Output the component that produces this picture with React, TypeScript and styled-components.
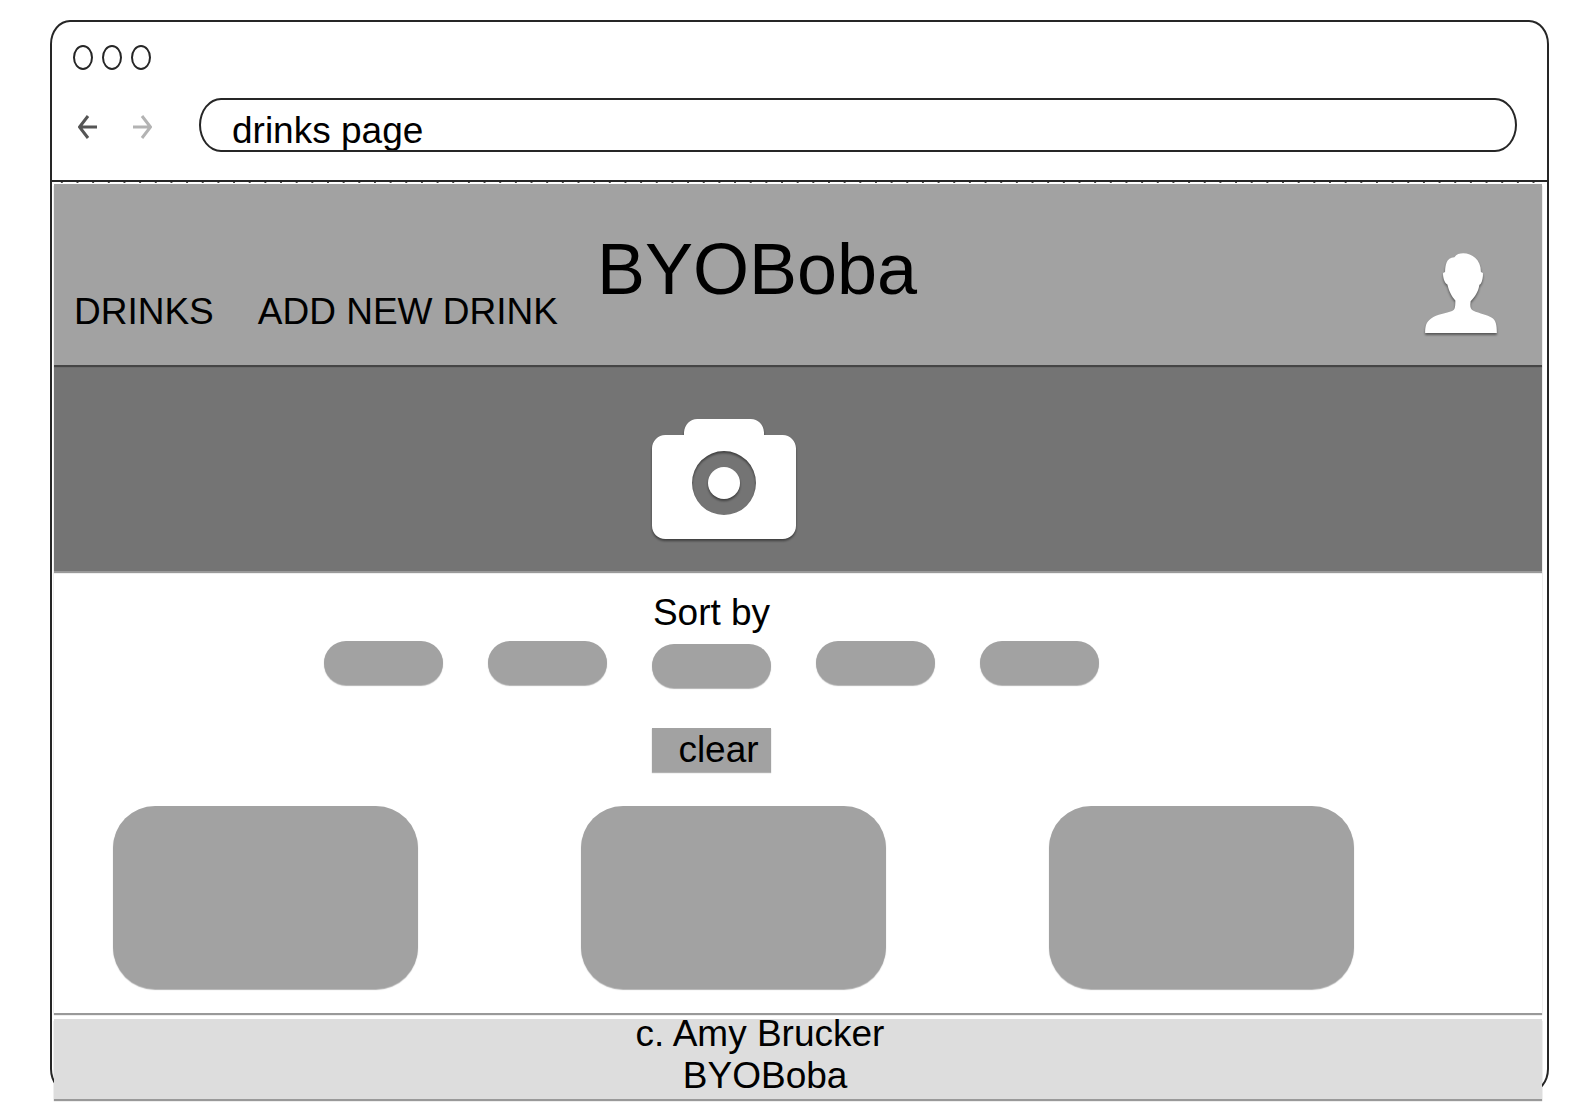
import React from "react";
import styled, { createGlobalStyle } from "styled-components";

const fontStack = `"Liberation Sans", Arial, Helvetica, sans-serif`;
const ink = "#262626";
const grey = "#a2a2a2";
const darkGrey = "#747474";
const panelShadow = "0 2px 1px rgba(0, 0, 0, 0.4)";
const softShadow = "0 1px 1px rgba(0, 0, 0, 0.3)";

const GlobalStyle = createGlobalStyle`
  *, *::before, *::after { box-sizing: border-box; }
  body {
    margin: 0;
    background: #fff;
    color: #000;
    font-family: ${fontStack};
    font-size: 37px;
    line-height: 42px;
  }
  button, input { font: inherit; color: inherit; }
  button { border: 0; padding: 0; background: none; cursor: pointer; }
  h1, h2, p, ul { margin: 0; padding: 0; font-weight: 400; }
  svg { display: block; }
`;

const Page = styled.div`
  display: flow-root;
  padding-bottom: 20px;
`;

const BrowserFrame = styled.div`
  margin: 20px 41px 0 50px;
  border: 2px solid ${ink};
  border-radius: 20px / 24px;
`;

const Chrome = styled.div`
  display: flex;
  flex-direction: column;
  gap: 28px;
  padding: 23px 30px 28px 21px;
  border-bottom: 2px solid ${ink};
`;

const WindowDots = styled.div`
  display: flex;
  gap: 9px;
`;

const Dot = styled.span`
  width: 20px;
  height: 25px;
  border: 2px solid ${ink};
  border-radius: 50%;
`;

const Toolbar = styled.div`
  display: flex;
  align-items: center;
  padding-left: 5px;
`;

const HistoryButtons = styled.div`
  display: flex;
  gap: 36px;
  margin-right: 47px;
  padding-top: 4px;
`;

const HistoryButton = styled.button<{ $muted?: boolean }>`
  color: ${(p) => (p.$muted ? "#b3b3b3" : "#555")};
`;

const AddressBar = styled.input`
  flex: 1;
  min-width: 0;
  height: 54px;
  padding: 11px 31px 0;
  border: 2px solid ${ink};
  border-radius: 22px / 27px;
  background: transparent;
  outline: 0;
`;

const Viewport = styled.div`
  display: flex;
  flex-direction: column;
  margin: 0 5px 0 2px;
`;

const Ruler = styled.div`
  height: 2px;
  background: linear-gradient(
      90deg,
      transparent calc(50% - 1px),
      #444 calc(50% - 1px),
      #444 calc(50% + 1px),
      transparent calc(50% + 1px)
    )
    0 0 / calc(100% / 95) 1px repeat-x;
`;

const Header = styled.header`
  position: relative;
  z-index: 3;
  display: flex;
  align-items: flex-start;
  height: 181px;
  padding: 43px 45px 0 20px;
  background: ${grey};
  box-shadow: ${panelShadow};
`;

const Nav = styled.nav`
  display: flex;
  gap: 44px;
  margin: 64px 39px 0 0;
  white-space: nowrap;
`;

const NavLink = styled.a`
  color: inherit;
  text-decoration: none;
`;

const Title = styled.h1`
  font-size: 72px;
  line-height: 84px;
`;

const ProfileButton = styled.button`
  margin: 26px 0 0 auto;
  filter: drop-shadow(0 2px 1px rgba(0, 0, 0, 0.45));
`;

const Hero = styled.section`
  position: relative;
  z-index: 2;
  display: flex;
  justify-content: center;
  height: 206px;
  padding: 54px 148px 0 0;
  background: ${darkGrey};
  box-shadow: ${panelShadow};

  svg {
    filter: drop-shadow(0 2px 1px rgba(0, 0, 0, 0.45));
  }
`;

const Content = styled.main`
  position: relative;
  z-index: 1;
  padding: 21px 0 24px;
  background: #fff;
  box-shadow: ${panelShadow};
`;

const SortArea = styled.section`
  display: flex;
  flex-direction: column;
  align-items: center;
  padding-right: 173px;
`;

const SortLabel = styled.h2`
  font-size: 37px;
`;

const Pills = styled.div`
  display: flex;
  align-items: flex-start;
  gap: 45px;
  margin: 7px 0 40px;
`;

const Pill = styled.button<{ $lowered?: boolean }>`
  width: 119px;
  height: 44px;
  margin-top: ${(p) => (p.$lowered ? "3px" : "0")};
  border-radius: 22px;
  background: ${grey};
  box-shadow: ${softShadow};
`;

const ClearButton = styled.button`
  width: 119px;
  height: 44px;
  padding-left: 14px;
  background: ${grey};
  box-shadow: ${softShadow};
`;

const DrinkList = styled.ul`
  display: flex;
  justify-content: space-between;
  margin-top: 34px;
  padding: 0 188px 0 59px;
  list-style: none;
`;

const DrinkCard = styled.li`
  width: 305px;
  height: 183px;
  border-radius: 42px;
  background: ${grey};
  box-shadow: ${softShadow};
`;

const Footer = styled.footer`
  position: relative;
  z-index: 2;
  display: flex;
  justify-content: center;
  height: 80px;
  margin: 6px 0 -8px;
  padding-right: 76px;
  background: #ddd;
  box-shadow: ${panelShadow};
`;

const Credit = styled.p`
  margin-top: -6px;
  text-align: center;
`;

const ArrowIcon = ({ forward }: { forward?: boolean }) => (
  <svg width="19" height="24" viewBox="0 0 19 24" fill="none" stroke="currentColor">
    {forward ? (
      <path d="M0 12H17M9 1L17.500 12L9 23" strokeWidth="3" />
    ) : (
      <path d="M19 12H2M10 1L1.500 12L10 23" strokeWidth="3" />
    )}
  </svg>
);

const PersonIcon = () => (
  <svg width="72" height="80" viewBox="75 68 216 241" fill="#fff">
    <path d="M190 69C216 69 243 88 243 125L249 128C250 140 247 152 243 160C240 164 239 162 238 166C235 185 225 200 212 213L211 224C211 233 213 238 219 241C240 251 262 254 276 263C288 271 291 284 291 309H75C75 290 77 276 93 265C110 253 140 250 156 243C164 239 166 235 166 211C156 201 147 184 142 163C133 158 128 140 129 128L135 125C136 105 138 82 163 81C170 72 178 69 190 69Z" />
  </svg>
);

const CameraIcon = () => (
  <svg width="144" height="120" viewBox="0 0 432 360" fill="#fff">
    <path
      fillRule="evenodd"
      d="M96 48V40C98 17 114 0 136 0H296C318 0 335 17 336 40V48H392C414 48 432 66 432 88V320C432 342 414 360 392 360H40C18 360 0 342 0 320V88C0 66 18 48 40 48ZM216 96A96 96 0 1 0 216 288A96 96 0 1 0 216 96Z"
    />
    <circle cx="216" cy="192" r="48" />
  </svg>
);

const sortOptions = [1, 2, 3, 4, 5];
const drinks = [1, 2, 3];

export default function App() {
  return (
    <Page>
      <GlobalStyle />
      <BrowserFrame>
        <Chrome>
          <WindowDots>
            <Dot />
            <Dot />
            <Dot />
          </WindowDots>
          <Toolbar>
            <HistoryButtons>
              <HistoryButton aria-label="Back">
                <ArrowIcon />
              </HistoryButton>
              <HistoryButton aria-label="Forward" $muted>
                <ArrowIcon forward />
              </HistoryButton>
            </HistoryButtons>
            <AddressBar aria-label="Address" type="text" defaultValue="drinks page" />
          </Toolbar>
        </Chrome>
        <Viewport>
          <Ruler />
          <Header>
            <Nav>
              <NavLink href="#drinks">DRINKS</NavLink>
              <NavLink href="#new">ADD NEW DRINK</NavLink>
            </Nav>
            <Title>BYOBoba</Title>
            <ProfileButton aria-label="Profile">
              <PersonIcon />
            </ProfileButton>
          </Header>
          <Hero>
            <CameraIcon />
          </Hero>
          <Content>
            <SortArea>
              <SortLabel>Sort by</SortLabel>
              <Pills>
                {sortOptions.map((n) => (
                  <Pill key={n} aria-label={`Sort option ${n}`} $lowered={n === 3} />
                ))}
              </Pills>
              <ClearButton>clear</ClearButton>
            </SortArea>
            <DrinkList id="drinks">
              {drinks.map((n) => (
                <DrinkCard key={n} />
              ))}
            </DrinkList>
          </Content>
          <Footer>
            <Credit>
              c. Amy Brucker
              <br />
              &nbsp;BYOBoba
            </Credit>
          </Footer>
        </Viewport>
      </BrowserFrame>
    </Page>
  );
}
